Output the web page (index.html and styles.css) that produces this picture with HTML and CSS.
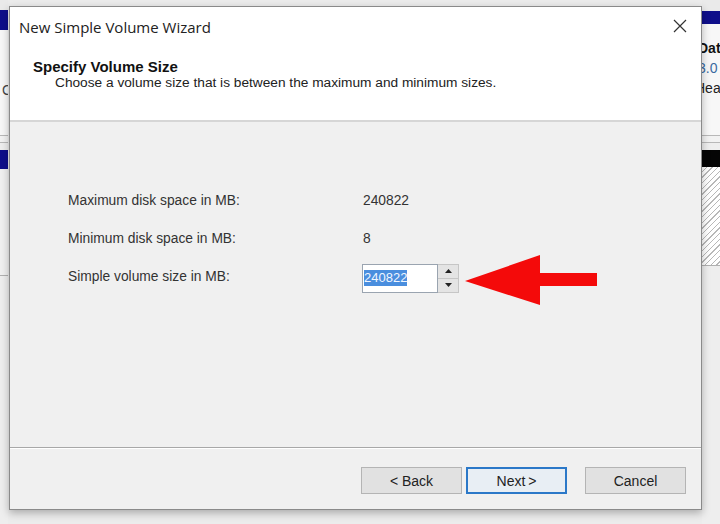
FILE: index.html
```html
<!DOCTYPE html>
<html>
<head>
<meta charset="utf-8">
<link rel="stylesheet" href="styles.css">
</head>
<body>
<div class="desk">
  <div class="strip strip-left">
    <div class="gap-top"></div>
    <div class="navy navy-l1"></div>
    <div class="pane-white pane-l"><span class="peek-c">C</span></div>
    <div class="rule2"></div>
    <div class="navy navy-l2"></div>
    <div class="pane-grey pane-lg"></div>
    <div class="rule1"></div>
  </div>

  <div class="dialog">
    <div class="header">
      <div class="titlebar">
        <span class="title">New Simple Volume Wizard</span>
        <svg class="close" width="14" height="14" viewBox="0 0 14 14"><path d="M1 1 L13 13 M13 1 L1 13" stroke="#333" stroke-width="1.2" fill="none"/></svg>
      </div>
      <div class="heading">Specify Volume Size</div>
      <div class="subheading">Choose a volume size that is between the maximum and minimum sizes.</div>
    </div>

    <div class="body">
      <div class="form">
        <div class="label">Maximum disk space in MB:</div>
        <div class="value">240822</div>
        <div class="label">Minimum disk space in MB:</div>
        <div class="value">8</div>
        <div class="label">Simple volume size in MB:</div>
        <div class="spinbox">
          <div class="field"><span class="sel">240822</span></div>
          <div class="spin">
            <div class="spin-btn"><svg width="7" height="4" viewBox="0 0 7 4"><path d="M0 4 L3.5 0 L7 4 Z" fill="#222"/></svg></div>
            <div class="spin-btn"><svg width="7" height="4" viewBox="0 0 7 4"><path d="M0 0 L3.5 4 L7 0 Z" fill="#222"/></svg></div>
          </div>
        </div>
      </div>
      <svg class="arrow" width="134" height="52" viewBox="0 0 134 52">
        <path d="M0 26 L75 0 L75 18 L132 18 L132 31 L75 31 L75 50 Z" fill="#f40a0a"/>
      </svg>
    </div>

    <div class="footer">
      <div class="btn">&lt; Back</div>
      <div class="btn btn-default">Next&thinsp;&gt;</div>
      <div class="btn btn-cancel">Cancel</div>
    </div>
  </div>

  <div class="strip strip-right">
    <div class="gap-top r"></div>
    <div class="navy navy-r1"></div>
    <div class="pane-white pane-r">
      <div class="peek-b">Dat</div>
      <div class="peek-n">3.0</div>
      <div class="peek-h">Hea</div>
    </div>
    <div class="rule2"></div>
    <div class="black-bar"></div>
    <div class="hatch"></div>
    <div class="rule1"></div>
  </div>
</div>
</body>
</html>
```

FILE: styles.css
```css
html, body {
  margin: 0;
  padding: 0;
}
body {
  width: 720px;
  height: 524px;
  overflow: hidden;
  background: #ececec;
  font-family: "Liberation Sans", Arial, sans-serif;
}
.desk {
  display: flex;
  align-items: flex-start;
  height: 524px;
}
.strip {
  display: flex;
  flex-direction: column;
  overflow: hidden;
  height: 524px;
  background: #eeeeee;
}
.strip-left { width: 8px; }
.strip-right { width: 18px; }
.gap-top { height: 10px; background: #eaeaea; }
.gap-top.r { height: 11px; }
.navy { background: #0f0f8a; }
.navy-l1 { height: 20px; }
.navy-l2 { height: 19px; }
.navy-r1 { height: 13px; }
.pane-white { background: #f7f7f7; }
.pane-l { height: 105px; position: relative; }
.pane-r { height: 111px; padding-top: 14px; box-sizing: border-box; }
.peek-c {
  display: block;
  margin-top: 52px;
  margin-left: 2px;
  font-size: 14px;
  color: #444;
}
.rule2 {
  height: 6px;
  border-top: 1px solid #b8b8b8;
  border-bottom: 1px solid #b8b8b8;
  background: #f2f2f2;
  margin-bottom: 7px;
}
.pane-grey { background: #f0f0f0; height: 106px; }
.rule1 { height: 1px; background: #b0b0b0; }
.black-bar { height: 17px; background: #050505; }
.hatch {
  height: 98px;
  background: repeating-linear-gradient(135deg, #ffffff 0 3px, #b8b8b8 3px 4px);
}
.peek-b, .peek-n, .peek-h {
  font-size: 14px;
  line-height: 20px;
  white-space: nowrap;
  margin-left: -4px;
}
.peek-b { font-weight: bold; color: #111; }
.peek-n { color: #3a6aa0; }
.peek-h { color: #222; margin-left: -7px; }

.dialog {
  position: relative;
  margin-top: 6px;
  margin-left: 1px;
  width: 693px;
  height: 504px;
  box-sizing: border-box;
  border: 1px solid #8a8a8a;
  background: #f0f0f0;
  box-shadow: 0 3px 8px rgba(0,0,0,0.28);
  display: flex;
  flex-direction: column;
}
.header {
  background: #ffffff;
  height: 115px;
  box-sizing: border-box;
  border-bottom: 2px solid #d6d6d6;
  flex: none;
}
.titlebar {
  display: flex;
  align-items: center;
  justify-content: space-between;
  height: 40px;
  padding: 0 14px 0 9px;
}
.title {
  font-family: "Open Sans", "Liberation Sans", sans-serif;
  font-size: 15px;
  color: #222;
}
.close { margin-top: -2px; }
.heading {
  margin-top: 11px;
  padding-left: 23px;
  font-weight: bold;
  font-size: 15px;
  line-height: 17px;
  color: #111;
}
.subheading {
  padding-left: 45px;
  font-size: 13.7px;
  line-height: 16px;
  color: #222;
}
.body {
  position: relative;
  flex: 1;
  padding: 64px 0 0 58px;
  border-bottom: 1px solid #a8a8a8;
  box-shadow: 0 1px 0 #ffffff;
}
.form {
  display: grid;
  grid-template-columns: 294px auto;
  grid-auto-rows: 28px;
  row-gap: 10px;
  align-items: center;
  font-size: 13.8px;
  color: #333;
}
.value { padding-left: 1px; }
.spinbox {
  display: flex;
  align-items: stretch;
  height: 29px;
  margin-top: 4px;
  margin-left: 0px;
}
.field {
  width: 73px;
  border: 1px solid #9aa4b0;
  background: #fff;
  display: flex;
  align-items: center;
  padding-left: 1px;
  font-size: 13px;
}
.sel {
  background: #4a8ede;
  color: #f0f6ff;
  line-height: 16px;
}
.spin {
  width: 20px;
  display: flex;
  flex-direction: column;
  border: 1px solid #c6c6c6;
  border-left: none;
  background: #e4e4e4;
}
.spin-btn {
  flex: 1;
  display: flex;
  align-items: center;
  justify-content: center;
}
.spin-btn + .spin-btn { border-top: 1px solid #c6c6c6; }
.arrow {
  position: absolute;
  left: 455px;
  top: 133px;
}
.footer {
  flex: none;
  height: 61px;
  box-sizing: border-box;
  display: flex;
  justify-content: flex-end;
  padding: 19px 15px 0 0;
}
.btn {
  width: 101px;
  height: 27px;
  box-sizing: border-box;
  border: 1px solid #b4b4b4;
  background: #e1e1e1;
  display: flex;
  align-items: center;
  justify-content: center;
  font-size: 14px;
  color: #222;
}
.btn + .btn { margin-left: 4px; }
.btn-default {
  border: 2px solid #2b78c8;
  background: #e8eef4;
}
.btn.btn-cancel { margin-left: 18px; }
```
